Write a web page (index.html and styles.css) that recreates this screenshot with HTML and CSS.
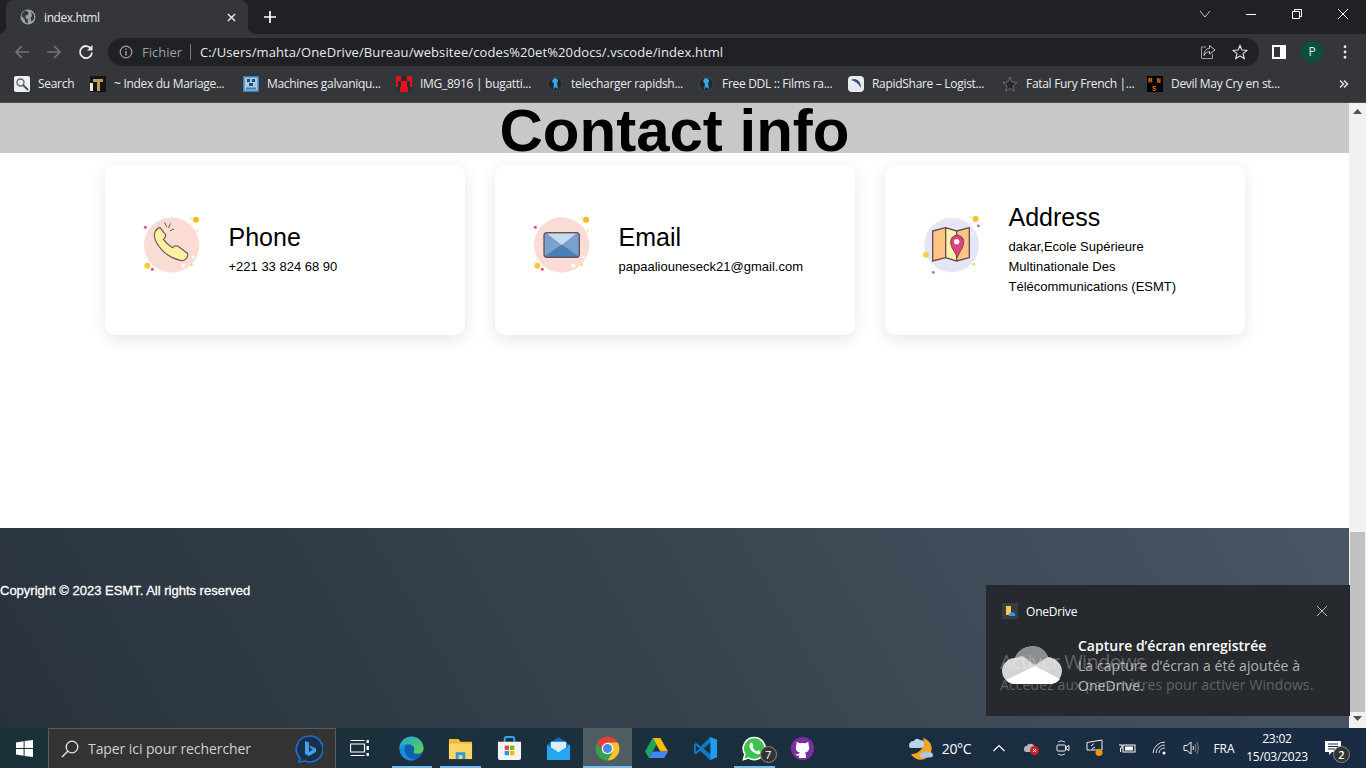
FILE: index.html
```html
<!DOCTYPE html>
<html lang="fr">
<head>
<meta charset="utf-8">
<title>index.html</title>
<link rel="stylesheet" href="styles.css">
</head>
<body>
<div class="screen">
  <header class="tabstrip">
    <div class="tab">
      <svg class="tab-globe" viewBox="0 0 16 16"><circle cx="8" cy="8" r="7.5" fill="#9aa0a6"/><path d="M5 1.5 L8.5 3 L8 6 L5.5 6.5 L5.5 9 L8 10.5 L7.5 14.5 L5.5 13.5 L4.5 10 L1.5 7 L2.5 4Z M11 2.5 L14 6 L14 10 L11.5 12.5 L10.5 9 L12 7Z" fill="#35363a"/></svg>
      <span class="tab-title">index.html</span>
      <svg class="tab-close" viewBox="0 0 10 10"><path d="M1 1 L9 9 M9 1 L1 9" stroke="#e8eaed" stroke-width="1.6"/></svg>
    </div>
    <svg class="newtab" viewBox="0 0 12 12"><path d="M6 0 V12 M0 6 H12" stroke="#fff" stroke-width="1.7"/></svg>
    <div class="winctl">
      <div class="winbtn winbtn-chev"><svg width="12" height="12" viewBox="0 0 12 12"><path d="M1 3 L6 9 L11 3" fill="none" stroke="#c4c7c9"/></svg></div>
      <div class="winbtn"><svg width="12" height="12" viewBox="0 0 12 12"><path d="M1 6.5 H11" stroke="#fff"/></svg></div>
      <div class="winbtn"><svg width="12" height="12" viewBox="0 0 12 12"><path d="M1.5 3.5 H8.5 V10.5 H1.5Z M3.5 3.5 V1.5 H10.5 V8.5 H8.5" fill="none" stroke="#fff"/></svg></div>
      <div class="winbtn"><svg width="12" height="12" viewBox="0 0 12 12"><path d="M1 1 L11 11 M11 1 L1 11" stroke="#fff"/></svg></div>
    </div>
  </header>

  <nav class="toolbar">
    <div class="navbtn"><svg width="16" height="16" viewBox="0 0 16 16"><path d="M15 8 H2 M8 2 L2 8 L8 14" fill="none" stroke="#717478" stroke-width="1.7"/></svg></div>
    <div class="navbtn"><svg width="16" height="16" viewBox="0 0 16 16"><path d="M1 8 H14 M8 2 L14 8 L8 14" fill="none" stroke="#717478" stroke-width="1.7"/></svg></div>
    <div class="navbtn"><svg width="16" height="16" viewBox="0 0 16 16"><path d="M13.2 5 A6 6 0 1 0 14 8.5" fill="none" stroke="#e8eaed" stroke-width="1.8"/><path d="M14.5 1 V6.5 H9Z" fill="#e8eaed"/></svg></div>
    <div class="omnibox">
      <svg class="omni-info" viewBox="0 0 14 14"><circle cx="7" cy="7" r="5.8" fill="none" stroke="#9aa0a6" stroke-width="1.2"/><path d="M7 6 V10.5 M7 3.5 V5" stroke="#9aa0a6" stroke-width="1.4"/></svg>
      <span class="omni-scheme">Fichier</span>
      <span class="omni-sep"></span>
      <span class="omni-url">C:/Users/mahta/OneDrive/Bureau/websitee/codes%20et%20docs/.vscode/index.html</span>
      <svg class="omni-share" viewBox="0 0 16 16"><path d="M6 3 H1.5 V14.5 H12.5 V10" fill="none" stroke="#9aa0a6"/><path d="M9.5 1.5 L15 6 L9.5 10 V7.7 C7 7.7 5 9 4 11.5 C4 7.5 6 4.5 9.5 4.3Z" fill="none" stroke="#c4c7c9"/></svg>
      <svg class="omni-star" viewBox="0 0 16 16"><path d="M8 1.5 L9.9 6 L14.8 6.4 L11.1 9.6 L12.2 14.4 L8 11.9 L3.8 14.4 L4.9 9.6 L1.2 6.4 L6.1 6Z" fill="none" stroke="#dadce0" stroke-width="1.2"/></svg>
    </div>
    <div class="sidepanel"><svg width="14" height="14" viewBox="0 0 14 14"><rect width="14" height="14" fill="#fff"/><rect x="2" y="2" width="6" height="10" fill="#35363a"/></svg></div>
    <div class="avatar">P</div>
    <svg class="kebab" viewBox="0 0 4 16"><circle cx="2" cy="2" r="1.6" fill="#e8eaed"/><circle cx="2" cy="8" r="1.6" fill="#e8eaed"/><circle cx="2" cy="14" r="1.6" fill="#e8eaed"/></svg>
  </nav>

  <nav class="bookmarks">
    <div class="bm"><svg class="fav" viewBox="0 0 16 16"><rect width="16" height="16" rx="2" fill="#eceff1"/><circle cx="6.5" cy="6.5" r="3.5" fill="none" stroke="#666" stroke-width="1.4"/><path d="M9 9 L14 14" stroke="#555" stroke-width="2"/></svg><span>Search</span></div>
    <div class="bm"><svg class="fav" viewBox="0 0 16 16"><rect width="16" height="16" fill="#1a1512"/><path d="M3 3 H13 V6 H10 V15 H7 V6 H3Z" fill="#b89a63"/><path d="M0 7 H3 V15 H0Z" fill="#e9e5dc"/></svg><span>~ Index du Mariage...</span></div>
    <div class="bm"><svg class="fav" viewBox="0 0 16 16"><rect width="16" height="16" fill="#3f7fb3"/><rect x="1.500" y="1.500" width="13" height="13" fill="#a9c9e0"/><path d="M4 3 H7 V6 H4Z M9 3 H12 V6 H9Z M6 7 H10 V10 H6Z" fill="#1d4f7d"/><rect x="3" y="11.500" width="10" height="2" fill="#3f7fb3"/></svg><span>Machines galvaniqu...</span></div>
    <div class="bm"><svg class="fav" viewBox="0 0 16 16"><rect width="16" height="16" fill="#2b2c30"/><path d="M0 0 H5 V5 H0Z M11 0 H16 V5 H11Z M5 5 H11 V11 H5Z M0 5 H2 V11 H0Z M14 5 H16 V11 H14Z M4 11 H12 V16 H4Z" fill="#e8101c"/></svg><span>IMG_8916 | bugatti...</span></div>
    <div class="bm"><svg class="fav" viewBox="0 0 16 16"><circle cx="8" cy="8" r="8" fill="#3a4046"/><circle cx="8" cy="8" r="6.500" fill="#23272b"/><path d="M7 2 C11 2 12 5 10 7 L11 13 L8 11 L6 14 L7 8 L5 5Z" fill="#3fa4e6"/></svg><span>telecharger rapidsh...</span></div>
    <div class="bm"><svg class="fav" viewBox="0 0 16 16"><circle cx="8" cy="8" r="8" fill="#3a4046"/><circle cx="8" cy="8" r="6.500" fill="#23272b"/><path d="M7 2 C11 2 12 5 10 7 L11 13 L8 11 L6 14 L7 8 L5 5Z" fill="#3fa4e6"/></svg><span>Free DDL :: Films ra...</span></div>
    <div class="bm"><svg class="fav" viewBox="0 0 16 16"><rect width="16" height="16" rx="4" fill="#e8eaee"/><path d="M3 4 C8 1 13 5 13 12 C10 7 7 5 3 4Z" fill="#2f4d7c"/></svg><span>RapidShare – Logist...</span></div>
    <div class="bm"><svg class="fav" viewBox="0 0 16 16"><path d="M8 1 L10 6 L15 6.5 L11 10 L12.2 15 L8 12.4 L3.800 15 L5 10 L1 6.500 L6 6Z" fill="#26272a" stroke="#8a8a8a" stroke-width=".7"/></svg><span>Fatal Fury French |...</span></div>
    <div class="bm"><svg class="fav" viewBox="0 0 16 16"><rect width="16" height="16" fill="#000"/><text class="fav-mns" x="1" y="7">M N</text><text class="fav-mns" x="5" y="15">S</text></svg><span>Devil May Cry en st...</span></div>
    <div class="bm-more"><svg width="10" height="10" viewBox="0 0 10 10"><path d="M1 1.5 L4.5 5 L1 8.5 M5 1.5 L8.5 5 L5 8.5" fill="none" stroke="#dfe1e5" stroke-width="1.5"/></svg></div>
  </nav>

  <div class="viewport">
    <main class="page">
      <h1 class="page-title">Contact info</h1>
      <section class="cards">
        <article class="card">
          <svg class="card-icon" viewBox="33 45 180 180">
            <circle cx="125" cy="120" r="83" fill="#fadcd5"/>
            <circle cx="198" cy="44" r="9" fill="#f6bb16"/><circle cx="185" cy="40" r="3" fill="#fbd977"/><circle cx="203" cy="77" r="3" fill="#fbd977"/>
            <circle cx="46" cy="67" r="4.5" fill="#ec4a6d"/><circle cx="52" cy="182" r="9" fill="#fbc93e"/><circle cx="67" cy="193" r="4.5" fill="#ec4a6d"/>
            <circle cx="160" cy="182" r="5.5" fill="#fff"/><circle cx="190" cy="155" r="4.5" fill="#fff"/><circle cx="185" cy="180" r="3.5" fill="#fbd25c"/><circle cx="50" cy="115" r="2" fill="#fff"/>
            <path d="M90 68 L106 88 Q109 95 103 100 L100 103 Q110 118 128 128 L132 124 Q138 121 144 124 L172 145 Q176 151 169 160 Q160 170 150 166 Q103 155 78 110 Q70 92 75 82 Q80 70 90 68Z" fill="#fdf0a0" stroke="#6b5a52" stroke-width="3.5" stroke-linejoin="round"/>
            <path d="M104 52 L110 66 M122 55 L115 69 M132 72 L120 77" stroke="#6b5a52" stroke-width="3"/>
          </svg>
          <div class="card-text">
            <h2 class="card-title">Phone</h2>
            <p class="card-line">+221 33 824 68 90</p>
          </div>
        </article>
        <article class="card">
          <svg class="card-icon" viewBox="18 45 180 180">
            <circle cx="110" cy="120" r="83" fill="#fadcd5"/>
            <circle cx="183" cy="44" r="9" fill="#f6bb16"/><circle cx="170" cy="40" r="3" fill="#fbd977"/><circle cx="188" cy="77" r="3" fill="#fbd977"/>
            <circle cx="31" cy="67" r="4.5" fill="#ec4a6d"/><circle cx="37" cy="182" r="9" fill="#fbc93e"/><circle cx="52" cy="193" r="4.5" fill="#ec4a6d"/>
            <circle cx="145" cy="182" r="5.5" fill="#fff"/><circle cx="175" cy="155" r="4.5" fill="#fff"/><circle cx="170" cy="180" r="3.5" fill="#fbd25c"/><circle cx="35" cy="115" r="2" fill="#fff"/>
            <rect x="57" y="83" width="106" height="74" rx="9" fill="#78a0d0"/>
            <path d="M62 84 H158 L110 122Z" fill="#c5dcf0" stroke="#6b6f86" stroke-width="1.5"/>
            <path d="M60 155 L110 120 L160 155Z" fill="#4a80b4" stroke="#56688a" stroke-width="1.5"/>
            <rect x="57" y="83" width="106" height="74" rx="9" fill="none" stroke="#665058" stroke-width="4"/>
          </svg>
          <div class="card-text">
            <h2 class="card-title">Email</h2>
            <p class="card-line">papaaliouneseck21@gmail.com</p>
          </div>
        </article>
        <article class="card">
          <svg class="card-icon" viewBox="18 45 180 180">
            <circle cx="110" cy="120" r="82" fill="#e5e5f8"/>
            <circle cx="182" cy="42" r="9" fill="#f8c22c"/><circle cx="168" cy="38" r="2.5" fill="#fbd977"/><circle cx="190" cy="62" r="4.5" fill="#8f8dc4"/>
            <circle cx="173" cy="83" r="3" fill="#fff"/><circle cx="33" cy="149" r="9" fill="#fbd04c"/><circle cx="55" cy="202" r="4.5" fill="#8f8dc4"/><circle cx="177" cy="178" r="4" fill="#fbd04c"/>
            <path d="M53 78 L92 68 V158 L53 168Z M125 78 L163 68 V158 L125 168Z" fill="#fcc585"/>
            <path d="M92 68 L125 78 V168 L92 158Z" fill="#fdf2ab"/>
            <path d="M53 78 L92 68 L125 78 L163 68 V158 L125 168 L92 158 L53 168Z M92 68 V158 M125 78 V105 M125 150 V168" fill="none" stroke="#6b4d4d" stroke-width="4" stroke-linejoin="round"/>
            <path d="M127 157 C120 140 107 128 107 110 A19 19 0 0 1 146 110 C146 128 133 140 127 157Z" fill="#dd4580" stroke="#7a3a50" stroke-width="3"/>
            <circle cx="125" cy="110" r="8" fill="#fff"/>
          </svg>
          <div class="card-text">
            <h2 class="card-title">Address</h2>
            <p class="card-line">dakar,Ecole Supérieure Multinationale Des Télécommunications (ESMT)</p>
          </div>
        </article>
      </section>
      <footer class="site-footer">
        <p class="copyright">Copyright © 2023 ESMT. All rights reserved</p>
      </footer>
    </main>
    <aside class="scrollbar">
      <svg class="sb-up" width="9" height="5" viewBox="0 0 9 5"><path d="M4.5 0 L9 5 H0Z" fill="#505050"/></svg>
      <div class="sb-thumb"></div>
      <svg class="sb-down" width="9" height="5" viewBox="0 0 9 5"><path d="M0 0 H9 L4.5 5Z" fill="#505050"/></svg>
    </aside>
  </div>

  <footer class="taskbar">
    <div class="start"><svg width="17" height="17" viewBox="0 0 17 17"><path d="M0 2.4 L7.6 1.3 V8 H0Z M8.6 1.1 L17 0 V8 H8.6Z M0 9 H7.6 V15.7 L0 14.6Z M8.6 9 H17 V17 L8.6 15.9Z" fill="#fff"/></svg></div>
    <div class="searchbox">
      <svg class="search-glass" viewBox="0 0 18 18"><circle cx="11" cy="7" r="5.8" fill="none" stroke="#e6e6e6" stroke-width="1.3"/><path d="M7 11 L1 17" stroke="#e6e6e6" stroke-width="1.5"/></svg>
      <span class="search-text">Taper ici pour rechercher</span>
      <svg class="search-bing" viewBox="0 0 28 28"><path d="M14 1 A13 13 0 1 1 10 26 L4 27 L5 23 A13 13 0 0 1 14 1Z" fill="#1a2f49" stroke="#1d6fd0" stroke-width="1.6"/><path d="M10 6 L14 7.5 V17 L18 14.5 L15.5 13 L14.5 10.5 L21 13.5 V17 L14 21 L10 19Z" fill="#3fa2ee"/></svg>
    </div>
    <div class="taskview"><svg width="20" height="18" viewBox="0 0 20 18"><path d="M0.5 5 H14.5 V13 H0.5Z M0.5 1.5 H14.5 M0.5 16.5 H14.5" fill="none" stroke="#fff" stroke-width="1.2"/><rect x="16.5" y="1" width="2.4" height="3" fill="#fff"/><rect x="16.5" y="7" width="2.4" height="4" fill="#fff"/><rect x="16.5" y="14" width="2.4" height="3" fill="#fff"/></svg></div>
    <div class="apps">
      <div class="app app-open"><svg class="app-ic" viewBox="0 0 26 26">
        <defs><linearGradient id="edgeA" x1="0" y1="0" x2="1" y2="1"><stop offset="0" stop-color="#1fa3d8"/><stop offset="1" stop-color="#5fd64a"/></linearGradient></defs>
        <circle cx="13" cy="13" r="12.5" fill="#0f5fb0"/>
        <path d="M.5 13 C.5 6 6 .5 13 .5 C20 .5 25.5 6 25.5 13 C25.5 16.5 22.5 18.5 19 18.5 C16.5 18.5 14.5 17.5 15.5 15.5 C17 12 14 8.5 10 8.5 C5 8.5 1.5 12 .5 13Z" fill="url(#edgeA)"/>
        <path d="M.5 13 C2 9.500 6 8 9 8.500 C5.500 10 5 14 6.500 17.500 C8 21 12 25 17 24.500 C15 25.500 14 25.500 13 25.500 C6 25.500 .5 20 .5 13Z" fill="#1a8fe0"/>
      </svg></div>
      <div class="app app-open"><svg class="app-ic" viewBox="0 0 26 26"><path d="M1 3 H11 L13 6 H25 V24 H1Z" fill="#f3bb3c"/><rect x="1" y="8" width="24" height="16" fill="#fbd667"/><path d="M8 24 V17 H18 V24 H15 V20 H11 V24Z" fill="#2b9adf"/></svg></div>
      <div class="app"><svg class="app-ic" viewBox="0 0 26 26"><path d="M8 7 V3 Q8 1 10 1 H16 Q18 1 18 3 V7" fill="none" stroke="#2fa8e8" stroke-width="2"/><path d="M1 6 H25 V23 Q25 25 23 25 H3 Q1 25 1 23Z" fill="#f4f4f4"/><rect x="8" y="10" width="4.500" height="4.500" fill="#e8482f"/><rect x="13.500" y="10" width="4.500" height="4.500" fill="#7fba00"/><rect x="8" y="15.500" width="4.500" height="4.500" fill="#1c9ce8"/><rect x="13.500" y="15.500" width="4.500" height="4.500" fill="#fcb900"/></svg></div>
      <div class="app"><svg class="app-ic" viewBox="0 0 26 26"><path d="M1 9 L13 1 L25 9 V23 H1Z" fill="#0f67b8"/><path d="M5 6 H21 V15 L13 20 L5 15Z" fill="#d8eefc"/><path d="M1 9 L13 17 L25 9 V25 H1Z" fill="#27a5ee"/></svg></div>
      <div class="app app-active"><svg class="app-ic" viewBox="-12.500 -12.500 25 25"><path d="M-10.390 -6 A12 12 0 0 1 10.390 -6 L0 -6 L-5.200 3Z" fill="#e34133"/><path d="M10.390 -6 A12 12 0 0 1 0 12 L5.200 3 L0 -6Z" fill="#fbc02d"/><path d="M0 12 A12 12 0 0 1 -10.390 -6 L-5.200 3 L5.200 3Z" fill="#3a9f4f"/><circle r="5.800" fill="#fff"/><circle r="4.500" fill="#4b87ec"/></svg></div>
      <div class="app"><svg class="app-ic" viewBox="0 0 26 26"><path d="M9 2 H17 L25 16 H17Z" fill="#fbbc04"/><path d="M9 2 L1 16 L5 23 L13 9Z" fill="#1ea362"/><path d="M5 23 H21 L25 16 H9Z" fill="#4285f4"/></svg></div>
      <div class="app"><svg class="app-ic" viewBox="0 0 26 26"><path d="M18 1 L25 4 V22 L18 25 L7 14.500 L12 11Z" fill="#1f9cf0"/><path d="M18 1 V25 L8 15 L3 19 L1 17.500 V8.500 L3 7 L8 11Z" fill="#0f7ac8"/><path d="M18 7 L11 13 L18 19Z" fill="#1c2f3e"/><path d="M3 9.500 L7 13 L3 16.500Z" fill="#1c2f3e"/></svg></div>
      <div class="app app-open app-wa">
        <svg class="app-ic" viewBox="0 0 26 26"><path d="M13 1.500 A11.500 11.500 0 1 1 7 23 L1.500 24.500 L3 19 A11.500 11.500 0 0 1 13 1.500Z" fill="#3ec34f" stroke="#fff" stroke-width="1.600"/><path d="M9 7 Q7 9 8 12 Q10 17 16 19 Q19 19.500 20 17 L17 14.500 L15.500 16 Q12 14.500 11 11.500 L12 10 L10.500 7Z" fill="#fff"/></svg>
        <span class="wa-badge">7</span>
      </div>
      <div class="app"><svg class="app-ic" viewBox="0 0 26 26"><circle cx="13" cy="13" r="12" fill="#7a2f9e"/><path d="M7 6 L10 7.500 Q13 7 16 7.500 L19 6 L19.500 10 Q21 14 18 16.500 L15.500 17.500 Q16.500 18.500 16.500 20 V23 H9.500 V20.500 Q6.500 21 5.500 18.500 Q7.500 19.500 9.500 18 L10.500 17.500 L8 16.500 Q5 14 6.500 10Z" fill="#fff"/></svg></div>
    </div>
    <div class="tray">
      <div class="tray-weather"><svg width="26" height="24" viewBox="0 0 26 24"><path d="M15 2 A11 11 0 1 1 3 18 A12 12 0 0 0 15 2Z" fill="#f4a324"/><path d="M1 10 Q1 5 6 5 Q8 1 12 4 Q17 4 16 9 Q16 12 12 12 H4 Q1 12 1 10Z" fill="#b9d4ef"/><path d="M12 21.500 Q11 17 15 17 Q17 14 20 16 Q25 16 25 19 Q25 21.500 22 21.500Z" fill="#a9c7e8"/></svg></div>
      <div class="tray-temp">20°C</div>
      <div class="tray-chev"><svg width="12" height="8" viewBox="0 0 12 8"><path d="M.5 7 L6 1.500 L11.500 7" fill="none" stroke="#fff" stroke-width="1.200"/></svg></div>
      <div><svg width="16" height="13" viewBox="0 0 16 13"><path d="M1 7 Q1 4 3.500 4 Q5 1 9 2 Q12 3 12 6 V10 H3 Q1 10 1 7Z" fill="#b4b6b8"/><circle cx="11.500" cy="8.500" r="4.500" fill="#d0202c"/><path d="M10 7 L13 10 M13 7 L10 10" stroke="#fff" stroke-width="1"/></svg></div>
      <div><svg width="14" height="18" viewBox="0 0 14 18"><path d="M2 3 Q5 .5 9 3 M2 15 Q5 17.500 9 15" fill="none" stroke="#ddd"/><rect x="1" y="6" width="8.500" height="6" rx="1" fill="none" stroke="#eee"/><path d="M10 8 L13 6.500 V11.500 L10 10Z" fill="none" stroke="#eee"/></svg></div>
      <div><svg width="18" height="18" viewBox="0 0 18 18"><path d="M1 3.500 L16 1 V11 H1Z" fill="none" stroke="#eee"/><path d="M5 7 L8 4.500 M9 8 L6 10" stroke="#eee"/><circle cx="13" cy="13.500" r="3.500" fill="#f2920f"/></svg></div>
      <div><svg width="17" height="11" viewBox="0 0 17 11"><rect x="4" y="2" width="12" height="7" fill="none" stroke="#fff"/><rect x="6" y="3.500" width="8" height="4" fill="#fff"/><path d="M0 2 H3 V5 H1.500 V9" fill="none" stroke="#fff"/></svg></div>
      <div class="tray-wifi"><svg width="16" height="14" viewBox="0 0 16 14"><path d="M1 12 A12 12 0 0 1 13 1 M4 12 A9 9 0 0 1 13 4 M7 12 A6 6 0 0 1 13 7" fill="none" stroke="#ddd"/><circle cx="12" cy="12" r="1.500" fill="#fff"/></svg></div>
      <div class="tray-sound"><svg width="17" height="14" viewBox="0 0 17 14"><path d="M1 4.500 H4 L8 1 V13 L4 9.500 H1Z" fill="none" stroke="#eee"/><path d="M10 5 Q11 7 10 9" fill="none" stroke="#eee"/><path d="M12 3 Q14 7 12 11 M14 1 Q17 7 14 13" fill="none" stroke="#888"/></svg></div>
      <div class="tray-lang">FRA</div>
      <div class="tray-clock"><span>23:02</span><span>15/03/2023</span></div>
      <div class="tray-notif"><svg width="16" height="14" viewBox="0 0 16 14"><path d="M0 0 H16 V11 H7 L4 14 V11 H0Z" fill="#fff"/><path d="M3 3 H13 M3 5.500 H13 M3 8 H10" stroke="#1c2f3e"/></svg><span class="notif-badge">2</span></div>
    </div>
  </footer>

  <aside class="toast">
    <div class="toast-head">
      <svg class="toast-appicon" viewBox="0 0 16 16"><rect width="16" height="16" fill="#3a3c40"/><path d="M4 3 H9 V12 H4Z" fill="#f6cb55"/><path d="M7 12 Q7 9 10 9.500 Q12 8.500 13 11 Q14 12 13 13 H7Z" fill="#2c9be6"/></svg>
      <span class="toast-app">OneDrive</span>
      <svg class="toast-x" viewBox="0 0 10 10"><path d="M0 0 L10 10 M10 0 L0 10" stroke="#b8babc"/></svg>
    </div>
    <div class="toast-body">
      <svg class="toast-cloud" viewBox="0 0 60 38"><path d="M13 12 C16 3 27 -2 36 1 C41 3 44 6 46 11 C54 12 60 18 60 25 C60 32 54 38 47 38 H14 C6 38 0 32 0 25 C0 18 6 12 13 12Z" fill="#d4d4d4"/><path d="M13 12 C16 3 27 -2 36 1 C41 3 44 6 46 11 L33 19 L20 10Z" fill="#8b8d8f"/><path d="M4 34 L33 20 L58 33 C56 36 52 38 47 38 H14 C10 38 7 37 4 34Z" fill="#fff"/></svg>
      <div class="toast-msg">
        <strong class="toast-title">Capture d’écran enregistrée</strong>
        <p class="toast-text">La capture d’écran a été ajoutée à OneDrive.</p>
      </div>
    </div>
  </aside>

  <div class="watermark">
    <p class="wm-title">Activer Windows</p>
    <p class="wm-text">Accédez aux paramètres pour activer Windows.</p>
  </div>
</div>
</body>
</html>
```

FILE: styles.css
```css
* { box-sizing: border-box; }
html, body { margin: 0; padding: 0; }
body { width: 1366px; height: 768px; overflow: hidden; background: #fff; font-family: "Liberation Sans", Arial, sans-serif; }
p, h1, h2 { margin: 0; }

.screen { position: relative; width: 1366px; height: 768px; display: flex; flex-direction: column; }

/* Browser chrome */
.tabstrip { height: 34px; flex: none; background: #202124; display: flex; align-items: flex-start; padding-left: 6px; }
.tab { position: relative; width: 242px; height: 34px; background: #35363a; border-radius: 8px 8px 0 0; display: flex; align-items: center; padding: 0 10px; gap: 8px; flex: none; }
.tab::before, .tab::after { content: ""; position: absolute; bottom: 0; width: 8px; height: 8px; }
.tab::before { left: -8px; background: radial-gradient(circle at 0 0, #202124 8px, #35363a 8.5px); }
.tab::after { right: -8px; background: radial-gradient(circle at 100% 0, #202124 8px, #35363a 8.5px); }
.tab-globe { width: 16px; height: 16px; flex: none; margin-left: 4px; }
.tab-title { flex: 1; font: 12px "Open Sans", sans-serif; letter-spacing: -0.4px; color: #e8eaed; }
.tab-close { width: 9px; height: 9px; flex: none; margin-right: 2px; }
.newtab { width: 12px; height: 12px; margin: 11px 0 0 16px; flex: none; }
.winctl { margin-left: auto; display: flex; height: 28px; }
.winbtn { width: 46px; height: 28px; display: flex; align-items: center; justify-content: center; }

.toolbar { height: 32px; flex: none; background: #35363a; display: flex; align-items: center; padding-left: 6px; }
.navbtn { width: 32px; height: 28px; display: flex; align-items: center; justify-content: center; flex: none; margin-top: 4px; }
.omnibox { width: 1151px; height: 28px; margin: 4px 0 0 6px; flex: none; background: #202124; border-radius: 14px; display: flex; align-items: center; padding-left: 11px; font-family: "Open Sans", sans-serif; font-size: 13px; }
.omni-info { width: 14px; height: 14px; flex: none; }
.omni-scheme { color: #9aa0a6; margin-left: 9px; width: 49px; letter-spacing: 0; }
.omni-sep { width: 1px; height: 16px; margin-left: -1px; background: #7b7e82; }
.omni-url { color: #e8eaed; margin-left: 9px; letter-spacing: 0.1px; white-space: nowrap; }
.omni-share { width: 16px; height: 16px; margin-left: auto; flex: none; }
.omni-star { width: 16px; height: 16px; margin: 0 11px 0 16px; flex: none; }
.sidepanel { width: 34px; margin: 4px 0 0 3px; display: flex; align-items: center; justify-content: center; flex: none; }
.avatar { width: 22px; height: 22px; margin: 4px 0 0 5px; border-radius: 50%; background: #0c4f41; color: #e8eaed; font: 12px/22px "Open Sans", sans-serif; text-align: center; flex: none; }
.kebab { width: 4px; height: 14px; margin: 4px 0 0 20px; flex: none; }

.bookmarks { height: 37px; flex: none; background: #35363a; border-bottom: 1px solid #4a4b4f; display: grid; grid-template-columns: 76px 153px 153px 151px 151px 150px 154px 145px 181px 31px; padding: 0 0 1px 14px; align-items: center; font: 12px "Open Sans", sans-serif; letter-spacing: -0.3px; color: #e8eaed; }
.bm { display: flex; align-items: center; gap: 8px; white-space: nowrap; }
.fav { width: 16px; height: 16px; flex: none; }
.fav-mns { font: bold 7px "Liberation Mono", monospace; letter-spacing: 0; fill: #e8741c; }
.bm-more { display: flex; justify-content: center; }

/* Page */
.viewport { flex: 1; min-height: 0; display: flex; }
.page { flex: 1; min-width: 0; display: flex; flex-direction: column; background: #fff; }
.page-title { height: 50px; flex: none; background: #c8c8c8; font-size: 60px; font-weight: bold; line-height: 56px; text-align: center; color: #000; }
.cards { flex: 1; width: 1140px; margin: 0 auto; padding-top: 12px; display: flex; gap: 30px; align-items: flex-start; }
.card { width: 360px; height: 170px; background: #fff; border-radius: 10px; box-shadow: 0 4px 16px rgba(0, 0, 0, 0.1); display: flex; align-items: center; padding: 1px 36px 0; gap: 28px; }
.card-icon { width: 60px; height: 60px; flex: none; overflow: visible; margin-top: -1px; }
.card-text { width: 200px; }
.card-title { font-size: 25px; line-height: 26px; font-weight: normal; color: #000; margin-bottom: 7px; }
.card-line { font-size: 13px; line-height: 20px; color: #000; }
.site-footer { height: 200px; flex: none; padding-top: 54px; background: linear-gradient(60deg, #29323c 0%, #485563 100%); }
.copyright { font-size: 13px; line-height: 17px; color: #fff; -webkit-text-stroke: 0.3px #fff; }

.scrollbar { width: 17px; flex: none; background: #f1f1f1; display: flex; flex-direction: column; align-items: center; }
.sb-up { margin-top: 6px; flex: none; }
.sb-thumb { width: 15px; height: 180px; background: #c1c1c1; margin-top: 418px; flex: none; }
.sb-down { margin-top: 4px; flex: none; }

/* Taskbar */
.taskbar { height: 40px; flex: none; background: linear-gradient(90deg, #1a3039, #1c2f3e 50%, #192b43); display: flex; align-items: stretch; font-family: "Open Sans", sans-serif; color: #fff; }
.start { width: 48px; display: flex; align-items: center; justify-content: center; flex: none; }
.searchbox { width: 288px; flex: none; background: #333; border: 1px solid #5c5c5c; border-bottom: 0; display: flex; align-items: center; padding-left: 12px; }
.search-glass { width: 18px; height: 18px; flex: none; }
.search-text { margin-left: 9px; font-size: 14px; letter-spacing: -0.08px; color: #d0d0d0; white-space: nowrap; }
.search-bing { width: 28px; height: 28px; margin-left: auto; margin-right: 12px; flex: none; }
.taskview { width: 48px; margin-right: 3.5px; display: flex; align-items: center; justify-content: center; flex: none; }
.apps { display: flex; flex: none; }
.app { width: 48.875px; position: relative; display: flex; align-items: center; justify-content: center; }
.app-ic { width: 25px; height: 25px; }
.app-open::after, .app-active::after { content: ""; position: absolute; left: 4px; right: 4px; bottom: 0; height: 2px; background: #76b9ed; }
.app-active { background: #4f5d63; }
.app-active::after { left: 0; right: 0; }
.wa-badge { position: absolute; left: 30px; top: 18px; width: 17px; height: 17px; border-radius: 50%; background: #333; border: 1px solid #8a8a8a; font-size: 11px; line-height: 15px; text-align: center; color: #fff; }
.tray { margin-left: auto; display: flex; align-items: center; padding-right: 12px; flex: none; font-size: 12px; }
.tray > div { width: 32px; height: 40px; display: flex; align-items: center; justify-content: center; flex: none; }
.tray > .tray-weather { width: 34px; }
.tray > .tray-temp { width: 37px; font-size: 14px; letter-spacing: -0.3px; }
.tray > .tray-chev { margin-left: 8px; }
.tray > .tray-wifi { width: 33px; }
.tray > .tray-sound { width: 30px; }
.tray > .tray-lang { width: 36px; font-size: 12px; }
.tray > .tray-clock { width: 70px; flex-direction: column; gap: 0; line-height: 18px; white-space: nowrap; letter-spacing: -0.2px; }
.tray > .tray-notif { width: 42px; position: relative; }
.notif-badge { position: absolute; left: 21px; top: 18px; width: 17px; height: 17px; border-radius: 50%; background: #333; border: 1px solid #8a8a8a; font-size: 11px; font-weight: 600; line-height: 15px; text-align: center; }

/* Overlays */
.toast { position: absolute; left: 986px; top: 585px; width: 364px; height: 131px; background: #26292e; color: #fff; font-family: "Open Sans", sans-serif; padding: 18px 16px 0 16px; }
.toast-head { display: flex; align-items: center; height: 16px; }
.toast-appicon { width: 16px; height: 16px; flex: none; }
.toast-app { margin-left: 8px; font-size: 12px; letter-spacing: -0.2px; }
.toast-x { width: 10px; height: 10px; margin-left: auto; margin-right: 7px; flex: none; }
.toast-body { display: flex; margin-top: 17px; }
.toast-cloud { width: 60px; height: 38px; margin-top: 10px; flex: none; }
.toast-msg { margin-left: 16px; width: 240px; }
.toast-title { display: block; font-size: 14px; font-weight: 600; line-height: 20px; letter-spacing: 0; }
.toast-text { font-size: 14px; line-height: 20px; color: #b0b2b4; letter-spacing: 0.06px; }
.watermark { position: absolute; left: 1000px; top: 648px; font-family: "Open Sans", sans-serif; color: rgba(255, 255, 255, 0.28); pointer-events: none; }
.wm-title { font-size: 20px; line-height: 27px; letter-spacing: -0.6px; }
.wm-text { font-size: 14px; line-height: 20px; letter-spacing: 0.1px; }
```
